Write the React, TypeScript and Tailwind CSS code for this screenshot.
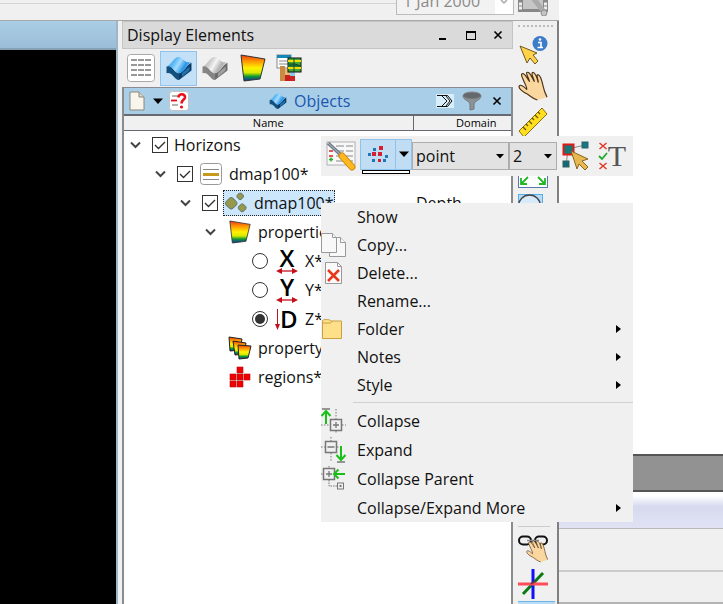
import type { ReactNode } from 'react';

const RAINBOW_STOPS = [
  ['0', '#ee3a10'],
  ['0.25', '#ff9a00'],
  ['0.5', '#fff200'],
  ['0.68', '#d8e800'],
  ['0.82', '#109a30'],
  ['1', '#1028b0'],
];

const RainbowIcon = ({ id, className }: { id: string; className: string }) => (
  <svg viewBox="0 0 26 28" className={className}>
    <defs>
      <linearGradient id={id} x1="0" y1="0" x2="0" y2="1">
        {RAINBOW_STOPS.map(([offset, color]) => (
          <stop key={offset} offset={offset} stopColor={color} />
        ))}
      </linearGradient>
    </defs>
    <path d="M1 1 L25 5 L20 25 L4 27 Z" fill={`url(#${id})`} stroke="#333" strokeWidth="1" />
  </svg>
);

const SurfaceIcon = ({ id, gray, className }: { id: string; gray?: boolean; className: string }) => (
  <svg viewBox="0 0 28 25" className={className}>
    <defs>
      <linearGradient id={id} x1="0" y1="0.2" x2="1" y2="0.6">
        <stop offset="0" stopColor={gray ? '#b4b4b4' : '#3a9ce4'} />
        <stop offset="0.3" stopColor={gray ? '#cccccc' : '#58b8f6'} />
        <stop offset="0.5" stopColor={gray ? '#f4f4f4' : '#a4dcff'} />
        <stop offset="0.75" stopColor={gray ? '#b0b0b0' : '#2c96e4'} />
        <stop offset="1" stopColor={gray ? '#e0e0e0' : '#58baf8'} />
      </linearGradient>
    </defs>
    <path d="M1 11C7 8 9 18 14 18V25C9 25 7 16 1 18Z" fill={gray ? '#858585' : '#12507e'} />
    <path d="M14 18C19 17 22 9 27 7V15L14 25Z" fill={gray ? '#6c6c6c' : '#0d3a66'} />
    <path d="M17 18L25 11V15L17 22Z" fill={gray ? '#a0a0a0' : '#2273ac'} />
    <path d="M1 11C6 9 8 2 13 1C18 0 20 9 27 6C22 9 20 17 14 18C9 18 7 9 1 11Z" fill={`url(#${id})`} />
  </svg>
);

const ListIcon = () => (
  <svg viewBox="0 0 28 28" className="size-7">
    <rect x="0.5" y="0.5" width="27" height="27" rx="3" fill="#fff" stroke="#a8a8a8" />
    {[6, 11, 16, 21].map((y) => (
      <path key={y} d={`M4 ${y}h6M11 ${y}h6M18 ${y}h6`} stroke="#777" strokeWidth="1.6" />
    ))}
  </svg>
);

const WellsIcon = () => (
  <svg viewBox="0 0 26 28" className="h-7 w-[26px]">
    <rect x="1" y="1" width="14" height="13" fill="#fff" stroke="#888" />
    <path d="M1 1h14v3h-14z" fill="#1688b8" />
    <path d="M3 7h9M3 10h9" stroke="#888" />
    <path d="M4 12h5v15h-5z" fill="#c98a42" />
    <path d="M9 15h5v12h-5z" fill="#e8b878" />
    <path d="M9 21h5v6h-5z" fill="#c42020" />
    <path d="M14 18h5v4h-5z" fill="#8cc8e8" />
    <path d="M14 22h5v5h-5z" fill="#cc2222" />
    <rect x="12" y="4" width="13" height="14" fill="#44a838" stroke="#111" />
    <path d="M12 7h13M12 14h13" stroke="#f0e000" strokeWidth="2" />
    <path d="M12 10h7l6 2h-13M18 4v14" stroke="#124a20" strokeWidth="1" fill="#1a8a50" />
  </svg>
);

const PageIcon = () => (
  <svg viewBox="0 0 16 20" className="h-5 w-4">
    <path d="M1 1h9l5 5v13h-14z" fill="#f8f5ec" stroke="#8d867a" />
    <path d="M10 1v5h5" fill="#ddd5c4" stroke="#8d867a" />
  </svg>
);

const HelpIcon = () => (
  <svg viewBox="0 0 20 20" className="size-5">
    <rect x="0.5" y="0.5" width="19" height="19" rx="3" fill="#fff" stroke="#c4c4c4" />
    <path d="M3 5h6M3 14h6" stroke="#999" strokeWidth="1.4" />
    <path d="M2 9.500h6" stroke="#e01020" strokeWidth="1.8" />
    <path d="M9.500 6.500C9.500 2 16.500 2.500 16 6.500C15.500 9 12.500 9 12.500 12.500" fill="none" stroke="#e8101c" strokeWidth="2.6" />
    <circle cx="12.500" cy="16" r="1.600" fill="#e8101c" />
  </svg>
);

const SigmaIcon = () => (
  <svg viewBox="0 0 18 14" className="h-3.5 w-[18px]">
    <rect width="18" height="14" fill="#d9eefb" />
    <path d="M1 1.500h10.500l4.500 5.500l-4.500 5.500H1M6 2l5 5l-5 5M10 2l4 5l-4 5" fill="none" stroke="#111" />
  </svg>
);

const FunnelIcon = () => (
  <svg viewBox="0 0 20 20" className="size-5">
    <path d="M1 5C1 9 8 10 8 13v6l4-1v-5C12 10 19 9 19 5z" fill="#8d9297" stroke="#70767b" />
    <ellipse cx="10" cy="4.500" rx="9" ry="3.500" fill="#64696d" stroke="#85898c" />
  </svg>
);

const CloseIcon = () => (
  <svg viewBox="0 0 10 10" className="size-2.5">
    <path d="M1.500 1.500l7 7M8.500 1.500l-7 7" stroke="#000" strokeWidth="1.6" />
  </svg>
);

const LayerIcon = () => (
  <svg viewBox="0 0 22 22" className="size-[22px]">
    <rect x="0.5" y="0.5" width="21" height="21" rx="3" fill="#fff" stroke="#999" />
    <path d="M3 6.500h16M3 16.500h16" stroke="#888" strokeWidth="1.200" />
    <path d="M3 11.500h16" stroke="#c89a1c" strokeWidth="3" />
  </svg>
);

const PointsIcon = () => (
  <svg viewBox="0 0 24 22" className="h-[22px] w-6" fill="#96994a" stroke="#6e7d70">
    <rect x="2.500" y="6.500" width="9.500" height="9.500" rx="2.500" transform="rotate(45 7.200 11.200)" />
    <rect x="13.500" y="1.500" width="5.500" height="5.500" rx="1.500" transform="rotate(45 16.200 4.200)" />
    <rect x="15" y="12.500" width="6.500" height="6.500" rx="1.500" transform="rotate(45 18.200 15.700)" />
  </svg>
);

// Bold axis letter over a double-headed arrow; depth gets a down arrow at its side.
const AxisIcon = ({ letter }: { letter: string }) =>
  letter === 'D' ? (
    <span className="flex h-[26px] w-6 items-center text-[24px] leading-6 font-semibold text-black">
      <svg viewBox="0 0 5 24" className="h-6 w-[5px] shrink-0">
        <path d="M2.500 2v18" stroke="#b81820" strokeWidth="1" />
        <path d="M0 17h5l-2.500 6z" fill="#c4101c" />
      </svg>
      D
    </span>
  ) : (
    <span className="flex h-[26px] w-6 flex-col items-center justify-end text-[24px] leading-5 font-semibold text-black">
      {letter}
      <svg viewBox="0 0 22 6" className="h-1.5 w-[22px] shrink-0">
        <path d="M3 3h16" stroke="#c4101c" strokeWidth="1.300" />
        <path d="M0 3l6-3v6zM22 3l-6-3v6z" fill="#c4101c" />
      </svg>
    </span>
  );

const PropertySetIcon = () => (
  <svg viewBox="0 0 24 24" className="size-6">
    <defs>
      <linearGradient id="set" x1="0" y1="0" x2="0" y2="1">
        {RAINBOW_STOPS.map(([offset, color]) => (
          <stop key={offset} offset={offset} stopColor={color} />
        ))}
      </linearGradient>
    </defs>
    <path d="M1 1l13 2l-2 11l-10 1z" fill="url(#set)" stroke="#222" />
    <path d="M5 5l13 2l-2 11l-9 1z" fill="url(#set)" stroke="#222" />
    <path d="M10 9l13 1l-3 12l-9 1z" fill="url(#set)" stroke="#222" />
  </svg>
);

const RegionsIcon = () => (
  <svg viewBox="0 0 22 22" className="size-[22px]" fill="#f00000" stroke="#b01010" strokeWidth="0.600">
    {[[8, 1], [1, 8], [8, 8], [15, 8], [1, 15], [8, 15]].map(([x, y]) => (
      <rect key={`${x}-${y}`} x={x} y={y} width="6" height="6" />
    ))}
  </svg>
);

const FilmIcon = () => (
  <svg viewBox="0 0 30 30" className="size-[30px] shrink-0">
    <rect x="0" y="2" width="30" height="24" fill="#888" />
    <rect x="5" y="3" width="20" height="20" fill="#c6c6c6" />
    {[5, 11, 17, 21].map((y) => (
      <path key={y} d={`M1 ${y + 1}h3M26 ${y + 1}h3`} stroke="#eee" strokeWidth="3" />
    ))}
    <path d="M12 8l14 18" stroke="#aaa" strokeWidth="5" />
    <circle cx="26" cy="27" r="3" fill="#c4c4c4" stroke="#909090" />
  </svg>
);

const InfoCursorIcon = () => (
  <svg viewBox="0 0 30 30" className="size-[30px]">
    <path d="M2 11L19 18L15 20L20 26L17 29L12 23L9 28Z" fill="#ffd24a" stroke="#6e5a20" />
    <circle cx="22" cy="8.500" r="7.500" fill="#3c7cc8" />
    <path d="M20 7.500h3v5M19.500 12.500h5.500" stroke="#fff" strokeWidth="1.600" fill="none" />
    <circle cx="22" cy="4.500" r="1.300" fill="#fff" />
  </svg>
);

const HAND = 'M20 30C16 29 13 26 10 24C6 22 1 19 1 16C2 13 6 16 9 19C10 18 7 13 5 8C3 4 3 2 6 3C8 4 10 8 12 11C11 7 8 3 9 1.500C12 0 14 6 17 11C16 7 13 3 15 1.500C18 1 20 8 21 12C21 9 19 6 20 4C23 3 25 11 26 16C27 21 28 23 30 27';

const HandIcon = () => (
  <svg viewBox="0 0 31 31" className="size-[30px]">
    <path d={HAND} fill="#fbd7a0" stroke="#4a3318" strokeWidth="1.200" />
  </svg>
);

const RulerIcon = () => (
  <svg viewBox="0 0 30 30" className="size-[30px]">
    <path d="M1 24L24 1L29 7L6 30Z" fill="#ffdf20" stroke="#8a7010" />
    <path d="M5 20l3 3M8 17l2 2M11 14l3 3M14 11l2 2M17 8l3 3M20 5l2 2" stroke="#6c5500" strokeWidth="1.300" />
  </svg>
);

const FitIcon = () => (
  <svg viewBox="0 0 30 30" className="size-[30px]">
    <rect x="0.5" y="0.5" width="29" height="29" fill="#fff" stroke="#5878b0" />
    <path d="M10 19l-7 7M3 20v6h6M20 19l7 7M27 20v6h-6" fill="none" stroke="#22b822" strokeWidth="1.800" />
  </svg>
);

const CircleIcon = () => (
  <svg viewBox="0 0 30 30" className="size-[30px]">
    <rect x="0.5" y="0.5" width="24" height="29" fill="#b8dcf6" stroke="#55aee8" />
    <circle cx="11.500" cy="12" r="11" fill="#d8eafa" stroke="#444" strokeWidth="1.300" />
  </svg>
);

const ChainHandIcon = () => (
  <svg viewBox="0 0 30 30" className="size-[30px]">
    <rect x="1" y="3.500" width="12" height="8" rx="4" fill="none" stroke="#111" strokeWidth="2" />
    <rect x="17" y="3.500" width="12" height="8" rx="4" fill="none" stroke="#111" strokeWidth="2" />
    <path d="M9 7.500h12" stroke="#888" strokeWidth="1.500" />
    <path d={HAND} transform="translate(8 7) scale(0.730)" fill="#fbd7a0" stroke="#6a5030" strokeWidth="1.100" />
  </svg>
);

const AxesIcon = () => (
  <svg viewBox="0 0 30 30" className="size-[30px]">
    <path d="M5 25L25 4" stroke="#0b7a12" strokeWidth="3" />
    <path d="M15 0v30" stroke="#1010f4" strokeWidth="3" />
    <path d="M0 15h30" stroke="#ff4c58" strokeWidth="3" />
    <path d="M13 15l4-3" stroke="#703050" strokeWidth="2" />
  </svg>
);

const SettingsIcon = () => (
  <svg viewBox="0 0 30 30" className="size-[30px]">
    <rect x="1" y="1" width="28" height="23" fill="#f8f8f8" stroke="#b0b0b0" />
    {[5, 10, 15, 20].map((y) => (
      <path key={y} d={`M10 ${y}h8M20 ${y}h7`} stroke="#888" />
    ))}
    <path d="M3 10h4M3 15h4" stroke="#e02020" strokeWidth="1.400" />
    <path d="M3 18.500h4M5 16.500v4" stroke="#20b020" strokeWidth="1.400" />
    <path d="M2 2L16 15" stroke="#6e7c88" strokeWidth="3.500" />
    <path d="M2 2L16 15" stroke="#b4c0c8" strokeWidth="1" />
    <path d="M16 15L26 26" stroke="#c88a10" strokeWidth="7" strokeLinecap="round" />
    <path d="M16 15L26 26" stroke="#ffb820" strokeWidth="5" strokeLinecap="round" />
  </svg>
);

const ScatterIcon = () => (
  <svg viewBox="0 0 20 18" className="h-[18px] w-5">
    <path d="M11 1h4v4h-4zM4 7h4v4h-4zM10 7h4v4h-4zM10 14h3v3h-3z" fill="#d42030" />
    <path d="M5 3h3v3h-3zM0 8h3v3h-3zM17 10h3v3h-3zM4 14h3v3h-3zM15 14h3v3h-3z" fill="#1c78b8" />
  </svg>
);

const EditNodesIcon = () => (
  <svg viewBox="0 0 28 30" className="h-[30px] w-7">
    <path d="M6 8L23 4M6 8L4 25" stroke="#888" />
    <rect x="1.500" y="3.500" width="10" height="10" fill="#127878" stroke="#e01818" strokeWidth="2" />
    <rect x="20" y="1" width="6" height="6" fill="#127888" stroke="#306060" />
    <rect x="1" y="20" width="6" height="6" fill="#126878" stroke="#306060" />
    <path d="M9 10L26 18L20 20L26 26L23 29L17 23L15 28Z" fill="#e8b850" stroke="#8a6420" />
  </svg>
);

const TextChecksIcon = () => (
  <span className="flex h-[30px] items-center">
    <svg viewBox="0 0 10 30" className="h-[30px] w-2.5 shrink-0">
      <path d="M1.500 2l7 6M8.500 2l-7 6M1.500 22l7 6M8.500 22l-7 6" stroke="#e03828" strokeWidth="1.500" />
      <path d="M1 15l3 3l5-6" fill="none" stroke="#20a828" strokeWidth="1.800" />
    </svg>
    <span className="font-['Liberation_Serif',serif] text-[30px] leading-[30px] text-[#555]">T</span>
  </span>
);

const CopyIcon = () => (
  <svg viewBox="0 0 26 26" className="size-[26px]" fill="#f8f8f8" stroke="#999">
    <path d="M8.500 5.500h11l5 5v14h-16z" />
    <path d="M19.500 5.500v5h5" />
    <path d="M0.500 1.500h11l4 4v15h-15z" />
    <path d="M11.500 1.500v4h4" />
  </svg>
);

const DeleteIcon = () => (
  <svg viewBox="0 0 26 26" className="size-[26px]">
    <path d="M4.500 2.500h12l4 4v17h-16z" fill="#fafafa" stroke="#999" />
    <path d="M16.500 2.500v4h4" fill="none" stroke="#999" />
    <path d="M7 10l11 11M18 10L7 21" stroke="#e8381c" strokeWidth="2.500" />
  </svg>
);

const FolderIcon = () => (
  <svg viewBox="0 0 26 26" className="size-[26px]">
    <path d="M1.500 5C1.500 3 9 3 10 5H20.500V22.500H1.500Z" fill="#ffe08a" stroke="#c8a040" />
    <path d="M1.500 7h8l2-2" fill="none" stroke="#c8a040" />
  </svg>
);

const CollapseIcon = () => (
  <svg viewBox="0 0 26 26" className="size-[26px]" fill="none" stroke="#777">
    <path d="M15 1v10M15 23v3M0 17h9M21 17h4" strokeDasharray="1.500 1.500" />
    <rect x="9.500" y="11.500" width="11" height="11" strokeWidth="1.500" />
    <path d="M12 17h6M15 14v6M1 1h8" strokeWidth="1.300" />
    <path d="M5 16V3M0.500 8L5 3l4.500 5" stroke="#18c018" strokeWidth="2" />
  </svg>
);

const ExpandIcon = () => (
  <svg viewBox="0 0 26 26" className="size-[26px]" fill="none" stroke="#777">
    <path d="M10 0v4M10 16v9M0 10h4M16 10h4" strokeDasharray="1.500 1.500" />
    <rect x="4.500" y="4.500" width="11" height="11" strokeWidth="1.500" />
    <path d="M6.500 10h7M16 25h8" strokeWidth="1.300" />
    <path d="M20 9v13M15.500 18l4.500 5l4.500-5" stroke="#18c018" strokeWidth="2" />
  </svg>
);

const CollapseParentIcon = () => (
  <svg viewBox="0 0 26 26" className="size-[26px]" fill="none" stroke="#777">
    <path d="M8 0v3M0 8h2M8 14v6h8" strokeDasharray="1.500 1" />
    <rect x="2.500" y="2.500" width="11" height="11" strokeWidth="1.500" />
    <path d="M5 8h6M8 5v6" strokeWidth="1.300" />
    <path d="M24 8H13M17.500 3.500L13 8l4.500 4.500" stroke="#18c018" strokeWidth="2" />
    <rect x="16.500" y="17" width="6" height="6" />
    <rect x="19" y="19.500" width="1" height="1" />
  </svg>
);

const Triangle = ({ className = 'w-2.5' }: { className?: string }) => (
  <svg viewBox="0 0 10 6" className={`h-1.5 shrink-0 ${className}`}>
    <path d="M0 0.500h10L5 6z" />
  </svg>
);

const Chevron = () => (
  <svg viewBox="0 0 11 8" className="h-2 w-[11px]">
    <path d="M1 1.500l4.500 4.500L10 1.500" fill="none" stroke="#444" strokeWidth="2" />
  </svg>
);

type Row = {
  label: string;
  pad: string;
  control?: 'check' | 'radio';
  on?: boolean;
  chevron?: boolean;
  icon?: ReactNode;
  domain?: string;
  selected?: boolean;
};

const rows: Row[] = [
  { label: 'Horizons', pad: 'pl-[6px]', control: 'check', on: true, chevron: true },
  { label: 'dmap100*', pad: 'pl-[31px]', control: 'check', on: true, chevron: true, icon: <LayerIcon /> },
  { label: 'dmap100*', pad: 'pl-[56px]', control: 'check', on: true, chevron: true, icon: <PointsIcon />, domain: 'Depth', selected: true },
  { label: 'properties', pad: 'pl-[81px]', chevron: true, icon: <RainbowIcon id="props" className="h-6 w-[22px]" /> },
  { label: 'X*', pad: 'pl-[128px]', control: 'radio', icon: <AxisIcon letter="X" /> },
  { label: 'Y*', pad: 'pl-[128px]', control: 'radio', icon: <AxisIcon letter="Y" /> },
  { label: 'Z*', pad: 'pl-[128px]', control: 'radio', on: true, icon: <AxisIcon letter="D" /> },
  { label: 'property sets', pad: 'pl-[103px]', icon: <PropertySetIcon /> },
  { label: 'regions*', pad: 'pl-[103px]', icon: <RegionsIcon /> },
];

const TreeRow = ({ row }: { row: Row }) => (
  <tr className="h-[29px]">
    <td className="p-0">
      <div className={`flex h-[29px] items-center whitespace-nowrap ${row.pad}`}>
        {row.chevron && (
          <button aria-label={`Toggle ${row.label}`} className="w-[22px] shrink-0">
            <Chevron />
          </button>
        )}
        <label className="flex h-full items-center">
          {row.control === 'check' && (
            <span className="relative mr-[5px] size-4">
              <input type="checkbox" defaultChecked={row.on} className="block size-4 appearance-none border border-[#333] bg-white" />
              <svg viewBox="0 0 16 16" className="pointer-events-none absolute inset-0 size-4">
                <path d="M3 8l3.500 3.500L13 5" fill="none" stroke="#333" strokeWidth="1.400" />
              </svg>
            </span>
          )}
          {row.control === 'radio' && (
            <span className="relative mr-1.5 size-4">
              <input type="radio" name="axis" defaultChecked={row.on} className="peer block size-4 appearance-none rounded-full border border-[#333] bg-white" />
              <span className="pointer-events-none absolute inset-[3px] hidden rounded-full bg-[#333] peer-checked:block" />
            </span>
          )}
          <span
            className={`flex h-[26px] items-center gap-1.5 ${
              row.selected ? 'border border-dotted border-[#222] bg-[#cce6fc]' : 'border border-transparent'
            }`}
          >
            {row.icon && <span className="flex w-6 shrink-0 justify-center">{row.icon}</span>}
            {row.label}
          </span>
        </label>
      </div>
    </td>
    <td className="p-0 pl-[3px]">{row.domain}</td>
  </tr>
);

const ToolButton = ({ label, children }: { label: string; children: ReactNode }) => (
  <button aria-label={label} className="flex size-[30px] shrink-0 items-center justify-center">
    {children}
  </button>
);

type Item = { label: string; icon?: ReactNode; more?: boolean };

const mainItems: Item[] = [
  { label: 'Show' },
  { label: 'Copy...', icon: <CopyIcon /> },
  { label: 'Delete...', icon: <DeleteIcon /> },
  { label: 'Rename...' },
  { label: 'Folder', icon: <FolderIcon />, more: true },
  { label: 'Notes', more: true },
  { label: 'Style', more: true },
];

const treeItems: Item[] = [
  { label: 'Collapse', icon: <CollapseIcon /> },
  { label: 'Expand', icon: <ExpandIcon /> },
  { label: 'Collapse Parent', icon: <CollapseParentIcon /> },
  { label: 'Collapse/Expand More', more: true },
];

const MenuItem = ({ item, height }: { item: Item; height: string }) => (
  <button role="menuitem" className={`flex w-full items-center pr-3 text-left ${height}`}>
    <span className="w-9 shrink-0">{item.icon}</span>
    <span className="flex-1">{item.label}</span>
    {item.more && (
      <svg viewBox="0 0 5 8" className="h-2 w-[5px]">
        <path d="M0 0v8l5-4z" />
      </svg>
    )}
  </button>
);

const ContextMenu = () => (
  <div role="menu" className="absolute top-[182px] left-[199px] w-[312px] bg-[#f0f0f0]">
    {mainItems.map((item) => (
      <MenuItem key={item.label} item={item} height="h-7" />
    ))}
    <hr className="my-[3px] ml-8 border-[#d0d0d0]" />
    {treeItems.map((item) => (
      <MenuItem key={item.label} item={item} height="h-[29px]" />
    ))}
  </div>
);

const Dropdown = ({ label, value, width }: { label: string; value: string; width: string }) => (
  <div className={`relative h-7 ${width}`}>
    <select aria-label={label} defaultValue={value} className="h-full w-full appearance-none border border-[#adadad] bg-[#e2e2e2] pl-[3px]">
      <option>{value}</option>
    </select>
    <Triangle className="pointer-events-none absolute top-[11px] right-[5px] w-2" />
  </div>
);

const StyleToolbar = () => (
  <div className="absolute top-[115px] left-[199px] flex h-10 w-[312px] items-center bg-[#f0f0f0] pl-[5px]">
    <ToolButton label="Display settings">
      <SettingsIcon />
    </ToolButton>
    <div className="ml-1 w-[52px]">
      <div className="flex h-[31px] border border-[#8fc3ec] bg-[#c0ddf4]">
        <button aria-label="Point display" className="flex flex-1 items-center justify-center">
          <ScatterIcon />
        </button>
        <button aria-label="Point display options" className="flex w-4 items-center justify-center border-l border-[#8fc3ec]">
          <Triangle />
        </button>
      </div>
      <div className="mx-0.5 h-1 border border-black bg-white" />
    </div>
    <Dropdown label="Marker" value="point" width="w-[97px]" />
    <Dropdown label="Size" value="2" width="w-[48px]" />
    <div className="ml-1 flex gap-1.5">
      <ToolButton label="Edit points">
        <EditNodesIcon />
      </ToolButton>
      <ToolButton label="Label settings">
        <TextChecksIcon />
      </ToolButton>
    </div>
  </div>
);

const TopBar = () => (
  <header className="h-[21px] overflow-hidden border-b border-[#a8a8a8]">
    <div className="flex h-5 items-end">
      <div className="mb-4 h-[3px] flex-1 border-b border-[#d4d4d4]" />
      <div className="mb-[5px] flex h-7 w-[118px] items-center border border-[#bbb] bg-[#f2f2f2]">
        <select aria-label="Date" className="h-full w-[98px] appearance-none pl-1.5 text-[#8a8a8a]">
          <option>1 Jan 2000</option>
        </select>
        <span className="flex h-full flex-1 items-center justify-center bg-white">
          <svg viewBox="0 0 8 8" className="size-2">
            <path d="M1 3l3 3l3-3" fill="none" stroke="#aaa" strokeWidth="1.500" />
          </svg>
        </span>
      </div>
      <div className="mr-[11px] mb-1 ml-1 flex">
        <FilmIcon />
      </div>
    </div>
  </header>
);

const ElementsPanel = () => (
  <section className="relative flex w-[391px] shrink-0 flex-col">
    <div className="flex h-7 items-center border border-[#c4c4c4] bg-[#dadada] pr-[9px] pl-1">
      <h1 className="flex-1">Display Elements</h1>
      <div className="flex items-center gap-[17px]">
        <button aria-label="Minimize" className="flex h-2.5 w-2.5 items-end">
          <span className="h-0.5 w-[7px] bg-black" />
        </button>
        <button aria-label="Maximize" className="h-[9px] w-2.5 border border-t-2 border-black" />
        <button aria-label="Close" className="w-2.5">
          <CloseIcon />
        </button>
      </div>
    </div>

    <div className="flex h-[38px] items-center gap-1 pl-[5px]">
      <button aria-label="List" className="w-[29px]">
        <ListIcon />
      </button>
      <button aria-label="Objects" className="flex h-[35px] w-[37px] items-center justify-center border border-[#90c4ee] bg-[#c4e0f6]">
        <SurfaceIcon id="blue" className="h-6 w-7" />
      </button>
      <button aria-label="Inactive objects" className="flex w-7 justify-center">
        <SurfaceIcon id="gray" gray className="h-6 w-7" />
      </button>
      <button aria-label="Properties" className="ml-1.5 flex w-7 justify-center">
        <RainbowIcon id="tab" className="h-7 w-[26px]" />
      </button>
      <button aria-label="Wells" className="ml-1 flex w-7 justify-center">
        <WellsIcon />
      </button>
    </div>

    <div className="flex flex-1 flex-col border-x-2 border-t border-[#888c90] bg-white">
      <div className="flex h-[26px] items-center bg-[#a9cee7] pr-[9px] pl-[5px]">
        <button aria-label="New">
          <PageIcon />
        </button>
        <button aria-label="New options" className="ml-2">
          <Triangle />
        </button>
        <button aria-label="Help" className="ml-1.5">
          <HelpIcon />
        </button>
        <h2 className="flex flex-1 items-center gap-[7px] pl-20 text-[16px] text-[#1c56b0]">
          <SurfaceIcon id="title" className="h-4 w-[18px]" />
          Objects
        </h2>
        <div className="flex items-center gap-2">
          <button aria-label="Summary">
            <SigmaIcon />
          </button>
          <button aria-label="Filter">
            <FunnelIcon />
          </button>
          <button aria-label="Close objects" className="ml-0.5">
            <CloseIcon />
          </button>
        </div>
      </div>
      <table className="w-full table-fixed border-collapse">
        <thead className="bg-[#f0f0f0] text-[11px] leading-3 text-black">
          <tr className="h-[15px]">
            <th scope="col" className="border border-t-2 border-l-0 border-[#666a70] p-0 font-medium">
              Name
            </th>
            <th scope="col" className="w-[98px] border border-t-2 border-r-0 border-[#666a70] p-0 pl-7 font-medium">
              Domain
            </th>
          </tr>
        </thead>
        <tbody>
          {rows.map((row, i) => (
            <TreeRow key={i} row={row} />
          ))}
        </tbody>
      </table>
    </div>

    <StyleToolbar />
    <ContextMenu />
  </section>
);

const SideTools = () => (
  <aside className="flex w-[46px] shrink-0 flex-col border-r-2 border-[#808080] pl-[5px]">
    <div className="mt-1 mb-2 w-[35px] border-t-2 border-dotted border-[#bbb]" />
    <div className="flex flex-col gap-1.5">
      <ToolButton label="Pick info">
        <InfoCursorIcon />
      </ToolButton>
      <ToolButton label="Pan">
        <HandIcon />
      </ToolButton>
      <ToolButton label="Measure">
        <RulerIcon />
      </ToolButton>
    </div>
    <div className="mt-[21px] flex flex-1 flex-col gap-1.5">
      <ToolButton label="Fit view">
        <FitIcon />
      </ToolButton>
      <ToolButton label="Circle select">
        <CircleIcon />
      </ToolButton>
    </div>
    <div className="mb-1.5 w-8 border-t border-[#ccc]" />
    <div className="mb-0.5 flex flex-col gap-1.5">
      <ToolButton label="Link views">
        <ChainHandIcon />
      </ToolButton>
      <ToolButton label="Axes">
        <AxesIcon />
      </ToolButton>
    </div>
    <div className="h-[3px] w-[37px] border-t border-[#70b4e8] bg-[#b8dcf6]" />
  </aside>
);

const BackWindow = () => (
  <div className="flex w-[164px] shrink-0 flex-col bg-white">
    <div className="flex-1" />
    <div className="h-[38px] border-y-2 border-[#555] bg-[#929292]" />
    <div className="h-[37px] border-b border-[#b8b8b8] bg-linear-to-b from-white from-10% via-[#d7daee] via-40% to-[#e0e2f4]" />
    <div className="h-[43px] border-b-2 border-[#ccc] bg-[#f0f0f0]" />
    <div className="h-8 border-b-2 border-[#b4b4b4] bg-[#f0f0f0]" />
  </div>
);

export default function App() {
  return (
    <main className="flex min-h-screen overflow-hidden bg-[#f0f0f0] font-['Open_Sans','Noto_Sans',sans-serif] text-[16px] leading-5 text-[#111]">
      <div className="flex min-w-0 flex-1 flex-col">
        <TopBar />
        <div className="flex flex-1">
          <div className="mr-1 flex min-w-0 flex-1 flex-col border-r-2 border-[#9db6c8] bg-black">
            <div className="h-[29px] border-b-2 border-[#84a0b4] bg-linear-to-b from-[#a9cee6] to-[#9dbdd7]" />
          </div>
          <ElementsPanel />
          <SideTools />
        </div>
      </div>
      <BackWindow />
    </main>
  );
}
